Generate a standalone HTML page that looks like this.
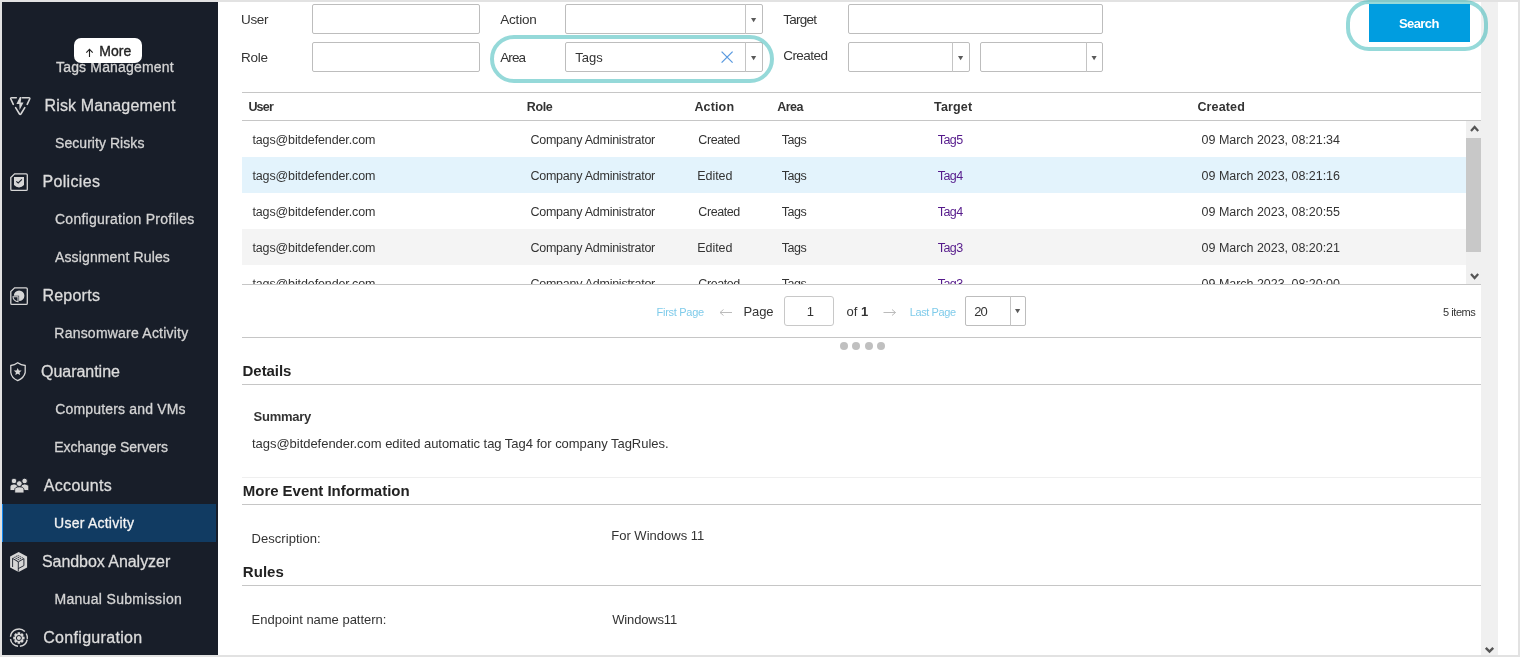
<!DOCTYPE html>
<html><head><meta charset="utf-8"><style>
*{box-sizing:border-box}
html,body{margin:0;padding:0}
body{width:1520px;height:657px;position:relative;overflow:hidden;background:#e2e2e2;font-family:"Liberation Sans",sans-serif}
.a{position:absolute;white-space:nowrap}
.inp{position:absolute;border:1px solid #bdbdbd;border-radius:2px;background:#fff}
.tri{position:absolute;width:0;height:0;border-left:3px solid transparent;border-right:3px solid transparent;border-top:4px solid #5a5a5a}
.hline{position:absolute;height:1px;background:#c6c6c6}
svg{overflow:visible;will-change:transform}
</style></head>
<body>
<div class="a" style="left:2px;top:2px;width:1516px;height:653px;background:#fff"></div>
<div class="a" style="left:2px;top:2px;width:216px;height:653px;background:#181e29"></div>
<div class="a" style="left:2px;top:504px;width:214px;height:38px;background:#113b62"></div>
<div class="a" style="left:2px;top:504px;width:1px;height:38px;background:#1488f0"></div>
<svg class="a" style="left:0;top:0" width="220" height="657" viewBox="0 0 220 657">
 <g fill="none" stroke="#d6d6d6" stroke-width="1.6" stroke-linecap="round" stroke-linejoin="round">
  <path d="M16.3 97.8 H11.6 Q10.3 97.8 10.8 99 L13.3 104.3"/>
  <path d="M22.4 97.8 H28.9 Q30.2 97.8 29.7 99 L27.2 104.3"/>
  <path d="M15.6 107.6 L19.5 114 Q20.2 114.9 20.9 114 L24.8 107.6"/>
 </g>
 <path d="M19.9 96.9 L16.4 104 H19.3 L19.6 110 L23.5 102.6 H20.6 L21.5 96.9Z" fill="#d6d6d6"/>
 <path d="M14.6 173.8 H26.1 Q27.3 173.8 27.3 175 V189.2 Q27.3 190.4 26.1 190.4 H12 Q10.8 190.4 10.8 189.2 V177.6 Z" fill="none" stroke="#d6d6d6" stroke-width="1.3"/>
 <path d="M14 177 H24 V185 Q22 187.3 19 187.6 Q16 187.3 14 185Z" fill="#d6d6d6"/>
 <path d="M16.3 181.3 L18.2 183 L21.9 179.4" fill="none" stroke="#181e29" stroke-width="1.1"/>
 <path d="M14.6 287.8 H26.1 Q27.3 287.8 27.3 289 V303.2 Q27.3 304.4 26.1 304.4 H12 Q10.8 304.4 10.8 303.2 V291.6 Z" fill="none" stroke="#d6d6d6" stroke-width="1.3"/>
 <path d="M19.1 295.7 H13.8 A5.3 5.3 0 1 1 19.1 301.0 Z" fill="#d6d6d6"/>
 <path d="M18.0 296.7 H13.000000000000002 A5.0 5.0 0 0 0 18.0 301.7 Z" fill="none" stroke="#d6d6d6" stroke-width="1.1"/>
 <path d="M17.7 362.8 Q14.5 365.2 10.8 365.5 V372.5 Q11.5 378 17.7 380.6 Q24 378 25.2 372.5 V365.5 Q21 365.2 17.7 362.8Z" fill="none" stroke="#d6d6d6" stroke-width="1.3"/>
 <path d="M17.7 367.9 L18.9 370.4 L21.6 370.6 L19.5 372.4 L20.1 375.1 L17.7 373.7 L15.3 375.1 L15.9 372.4 L13.8 370.6 L16.5 370.4Z" fill="#d6d6d6"/>
 <g fill="#d6d6d6" stroke="#181e29" stroke-width="0.9">
  <circle cx="14" cy="481" r="2.8"/>
  <path d="M10 490.5 V486.7 Q10.3 483.9 14 483.9 Q17.7 483.9 18 486.7 V490.5Z"/>
  <circle cx="24.6" cy="481" r="2.8"/>
  <path d="M20.8 490.5 V486.7 Q21.1 483.9 24.8 483.9 Q28.5 483.9 28.8 486.7 V490.5Z"/>
  <circle cx="19.3" cy="483.6" r="2.9"/>
  <path d="M14.7 493 V489.6 Q14.9 486.8 19.3 486.8 Q23.7 486.8 24 489.6 V493Z"/>
 </g>
 <path d="M18.6 551.9 L27.1 556.4 V567.6 L18.6 572.1 L10.1 567.6 V556.4Z" fill="#d6d6d6"/>
 <g fill="none" stroke="#181e29" stroke-width="0.9">
  <path d="M12.6 558.4 V567 M18.3 561.9 V571.6 M23.9 558.6 V565.6 L18.3 568.6"/>
  <path d="M12.6 558.4 L18.3 561.9 L23.9 558.6"/>
 </g>
 <g fill="none" stroke="#181e29" stroke-width="0.8" stroke-dasharray="1.1 1.1">
  <path d="M12.6 558.4 L18.2 555.3 L23.9 558.6"/>
  <path d="M14.5 557.3 L20.1 560.6 M16.4 556.2 L22 559.6 M16.4 560.6 L22 557.5 M14.5 559.6 L20.1 556.4"/>
 </g>
 <g fill="none" stroke="#d6d6d6" stroke-width="1.45">
  <path d="M10.5 636.8 A8.4 8.4 0 0 1 24.9 631.6"/>
  <path d="M26.2 633.5 A8.4 8.4 0 0 1 27.3 638.8"/>
  <path d="M27.2 639.6 A8.4 8.4 0 0 1 19.9 646.3"/>
  <path d="M18 646.3 A8.4 8.4 0 0 1 10.5 639.2"/>
 </g>
 <path d="M22.78 636.39 L22.86 636.60 L24.56 636.73 L24.56 639.27 L22.86 639.40 L22.78 639.61 L22.69 639.81 L23.80 641.11 L22.01 642.90 L20.71 641.79 L20.51 641.88 L20.30 641.96 L20.17 643.66 L17.63 643.66 L17.50 641.96 L17.29 641.88 L17.09 641.79 L15.79 642.90 L14.00 641.11 L15.11 639.81 L15.02 639.61 L14.94 639.40 L13.24 639.27 L13.24 636.73 L14.94 636.60 L15.02 636.39 L15.11 636.19 L14.00 634.89 L15.79 633.10 L17.09 634.21 L17.29 634.12 L17.50 634.04 L17.63 632.34 L20.17 632.34 L20.30 634.04 L20.51 634.12 L20.71 634.21 L22.01 633.10 L23.80 634.89 L22.69 636.19Z" fill="#d6d6d6"/>
 <circle cx="18.9" cy="638.0" r="2.5" fill="none" stroke="#181e29" stroke-width="1"/>
</svg>

<svg class="a" style="left:0;top:0" width="220" height="657" viewBox="0 0 220 657" font-family="Liberation Sans" stroke-width="0.3">
<text stroke="#d4d4d4" x="56.00" y="72" font-size="14" font-weight="normal" fill="#d4d4d4" letter-spacing="0.172" >Tags Management</text>
<text stroke="#dcdcdc" x="44.50" y="111" font-size="16" font-weight="normal" fill="#dcdcdc" letter-spacing="0.143" >Risk Management</text>
<text stroke="#d4d4d4" x="55.00" y="148" font-size="14" font-weight="normal" fill="#d4d4d4" letter-spacing="0.055" >Security Risks</text>
<text stroke="#dcdcdc" x="42.40" y="187" font-size="16" font-weight="normal" fill="#dcdcdc" letter-spacing="0.338" >Policies</text>
<text stroke="#d4d4d4" x="55.00" y="224" font-size="14" font-weight="normal" fill="#d4d4d4" letter-spacing="0.255" >Configuration Profiles</text>
<text stroke="#d4d4d4" x="55.00" y="262" font-size="14" font-weight="normal" fill="#d4d4d4" letter-spacing="0.132" >Assignment Rules</text>
<text stroke="#dcdcdc" x="42.40" y="301" font-size="16" font-weight="normal" fill="#dcdcdc" letter-spacing="0.246" >Reports</text>
<text stroke="#d4d4d4" x="54.30" y="338" font-size="14" font-weight="normal" fill="#d4d4d4" letter-spacing="0.222" >Ransomware Activity</text>
<text stroke="#dcdcdc" x="41.00" y="377" font-size="16" font-weight="normal" fill="#dcdcdc" letter-spacing="-0.030" >Quarantine</text>
<text stroke="#d4d4d4" x="55.30" y="414" font-size="14" font-weight="normal" fill="#d4d4d4" letter-spacing="0.162" >Computers and VMs</text>
<text stroke="#d4d4d4" x="54.30" y="452" font-size="14" font-weight="normal" fill="#d4d4d4" letter-spacing="-0.046" >Exchange Servers</text>
<text stroke="#dcdcdc" x="43.80" y="491" font-size="16" font-weight="normal" fill="#dcdcdc" letter-spacing="0.312" >Accounts</text>
<text stroke="#f4f4f4" x="54.10" y="528" font-size="14" font-weight="normal" fill="#f4f4f4" letter-spacing="0.234" >User Activity</text>
<text stroke="#dcdcdc" x="41.90" y="567" font-size="16" font-weight="normal" fill="#dcdcdc" letter-spacing="-0.042" >Sandbox Analyzer</text>
<text stroke="#d4d4d4" x="54.40" y="604" font-size="14" font-weight="normal" fill="#d4d4d4" letter-spacing="0.326" >Manual Submission</text>
<text stroke="#dcdcdc" x="43.20" y="643" font-size="16" font-weight="normal" fill="#dcdcdc" letter-spacing="0.319" >Configuration</text>
</svg>
<div class="a" style="left:74px;top:38px;width:68px;height:25px;background:#fff;border-radius:7px"></div>
<svg class="a" style="left:0;top:0" width="220" height="80" viewBox="0 0 220 80" font-family="Liberation Sans">
<path d="M89.5 57 V49.5 M86.3 52.7 L89.5 49.3 L92.7 52.7" fill="none" stroke="#222" stroke-width="1.1"/>
<text stroke="#222" stroke-width="0.35" x="99.30" y="56" font-size="14" font-weight="normal" fill="#222" letter-spacing="-0.003" >More</text>
</svg>

<div class="inp" style="left:312px;top:4px;width:168px;height:30px;"></div>
<div class="inp" style="left:312px;top:42px;width:168px;height:30px;"></div>
<div class="inp" style="left:848px;top:4px;width:255px;height:30px;"></div>
<div class="inp" style="left:565px;top:4px;width:198px;height:30px;"></div>
<div class="a" style="left:745px;top:4px;width:1px;height:30px;background:#c4c4c4"></div>
<svg class="a" style="left:0;top:0" width="1" height="1" viewBox="0 0 1 1"><path d="M751.00 18 H756.20 L753.60 22.2Z" fill="#5a5a5a"/></svg>
<div class="inp" style="left:565px;top:42px;width:198px;height:30px;"></div>
<div class="a" style="left:745px;top:42px;width:1px;height:30px;background:#c4c4c4"></div>
<svg class="a" style="left:0;top:0" width="1" height="1" viewBox="0 0 1 1"><path d="M751.00 56 H756.20 L753.60 60.2Z" fill="#5a5a5a"/></svg>
<div class="inp" style="left:848px;top:42px;width:122px;height:30px;"></div>
<div class="a" style="left:952px;top:42px;width:1px;height:30px;background:#c4c4c4"></div>
<svg class="a" style="left:0;top:0" width="1" height="1" viewBox="0 0 1 1"><path d="M958.00 56 H963.20 L960.60 60.2Z" fill="#5a5a5a"/></svg>
<div class="inp" style="left:980px;top:42px;width:123px;height:30px;"></div>
<div class="a" style="left:1086px;top:42px;width:1px;height:30px;background:#c4c4c4"></div>
<svg class="a" style="left:0;top:0" width="1" height="1" viewBox="0 0 1 1"><path d="M1091.50 56 H1096.70 L1094.10 60.2Z" fill="#5a5a5a"/></svg>
<svg class="a" style="left:720px;top:50px" width="14" height="14" viewBox="720 50 14 14"><path d="M721.6 51.6 L732.6 62.6 M732.6 51.6 L721.6 62.6" stroke="#5b9be0" stroke-width="1.3"/></svg>
<div class="a" style="left:1369px;top:4px;width:101px;height:38px;background:#009de0"></div>
<div class="hline" style="left:242px;top:92px;width:1239px"></div>
<div class="hline" style="left:242px;top:120px;width:1239px"></div>
<div class="a" style="left:242px;top:157px;width:1224px;height:36px;background:#e3f3fc"></div>
<div class="a" style="left:242px;top:229px;width:1224px;height:36px;background:#f4f4f4"></div>
<div class="a" style="left:1466px;top:121px;width:15px;height:163px;background:#f0f0f0"></div>
<div class="a" style="left:1466px;top:138px;width:15px;height:114px;background:#c8c8c8"></div>
<svg class="a" style="left:1466px;top:121px" width="15" height="163" viewBox="1466 121 15 163"><path d="M1471 131 L1474.6 127 L1478.2 131" fill="none" stroke="#555" stroke-width="2.2"/><path d="M1471 274 L1474.6 278 L1478.2 274" fill="none" stroke="#555" stroke-width="2.2"/></svg>
<div class="hline" style="left:242px;top:284px;width:1239px"></div>
<div class="inp" style="left:784px;top:296px;width:50px;height:30px;border-radius:3px;border-color:#c8c8c8"></div>
<div class="inp" style="left:965px;top:296px;width:61px;height:30px;"></div>
<div class="a" style="left:1010px;top:296px;width:1px;height:30px;background:#c4c4c4"></div>
<svg class="a" style="left:0;top:0" width="1" height="1" viewBox="0 0 1 1"><path d="M1015.00 309 H1020.20 L1017.60 313.2Z" fill="#5a5a5a"/></svg>
<svg class="a" style="left:715px;top:305px" width="190" height="15" viewBox="715 305 190 15"><path d="M720 312.5 H732 M723.5 309.5 L720 312.5 L723.5 315.5" fill="none" stroke="#bbb" stroke-width="1"/><path d="M883.5 312.5 H895.5 M892 309.5 L895.5 312.5 L892 315.5" fill="none" stroke="#bbb" stroke-width="1"/></svg>
<div class="hline" style="left:242px;top:337px;width:1239px"></div>
<div class="a" style="left:840px;top:342.3px;width:8px;height:8px;border-radius:4px;background:#c0c0c0"></div>
<div class="a" style="left:852.3px;top:342.3px;width:8px;height:8px;border-radius:4px;background:#c0c0c0"></div>
<div class="a" style="left:864.7px;top:342.3px;width:8px;height:8px;border-radius:4px;background:#c0c0c0"></div>
<div class="a" style="left:877px;top:342.3px;width:8px;height:8px;border-radius:4px;background:#c0c0c0"></div>
<div class="hline" style="left:242px;top:384px;width:1239px"></div>
<div class="a" style="left:242px;top:477px;width:1239px;height:1px;background:#efefef"></div>
<div class="hline" style="left:242px;top:504px;width:1239px"></div>
<div class="hline" style="left:242px;top:585px;width:1239px"></div>
<div class="a" style="left:1481px;top:2px;width:17px;height:653px;background:#f0f0f0"></div>
<svg class="a" style="left:1481px;top:640px" width="17" height="15" viewBox="1481 640 17 15"><path d="M1485.8 647.8 L1489.5 651.6 L1493.2 647.8" fill="none" stroke="#555" stroke-width="2.4"/></svg>

<svg class="a" style="left:0;top:0" width="1520" height="657" viewBox="0 0 1520 657" font-family="Liberation Sans">
<text x="241.10" y="24" font-size="13.5" font-weight="normal" fill="#333" letter-spacing="-0.402" >User</text>
<text x="241.10" y="62" font-size="13.5" font-weight="normal" fill="#333" letter-spacing="-0.252" >Role</text>
<text x="500.20" y="24" font-size="13.5" font-weight="normal" fill="#333" letter-spacing="-0.182" >Action</text>
<text x="500.20" y="62" font-size="13.5" font-weight="normal" fill="#333" letter-spacing="-0.869" >Area</text>
<text x="783.20" y="24" font-size="13.5" font-weight="normal" fill="#333" letter-spacing="-0.734" >Target</text>
<text x="783.20" y="60" font-size="13.5" font-weight="normal" fill="#333" letter-spacing="-0.553" >Created</text>
<text x="575.30" y="62" font-size="13" font-weight="normal" fill="#333" letter-spacing="0.000" >Tags</text>
<text x="1399.00" y="28" font-size="13" font-weight="bold" fill="#fff" letter-spacing="-0.604" >Search</text>
<text x="248.40" y="111" font-size="12.5" font-weight="bold" fill="#333" letter-spacing="-0.810" >User</text>
<text x="526.80" y="111" font-size="12.5" font-weight="bold" fill="#333" letter-spacing="-0.378" >Role</text>
<text x="694.40" y="111" font-size="12.5" font-weight="bold" fill="#333" letter-spacing="0.150" >Action</text>
<text x="777.20" y="111" font-size="12.5" font-weight="bold" fill="#333" letter-spacing="-0.515" >Area</text>
<text x="934.00" y="111" font-size="12.5" font-weight="bold" fill="#333" letter-spacing="0.178" >Target</text>
<text x="1197.40" y="111" font-size="12.5" font-weight="bold" fill="#333" letter-spacing="0.148" >Created</text>
<text x="656.60" y="316" font-size="11" font-weight="normal" fill="#7fcbea" letter-spacing="-0.290" >First Page</text>
<text x="743.50" y="316" font-size="13" font-weight="normal" fill="#333" letter-spacing="-0.110" >Page</text>
<text x="806.80" y="316" font-size="13" font-weight="normal" fill="#333" letter-spacing="0.000" >1</text>
<text x="846.60" y="316" font-size="13" font-weight="normal" fill="#333" letter-spacing="0.000" >of</text>
<text x="861.00" y="316" font-size="13" font-weight="bold" fill="#333" letter-spacing="0.000" >1</text>
<text x="909.70" y="316" font-size="11" font-weight="normal" fill="#7fcbea" letter-spacing="-0.390" >Last Page</text>
<text x="974.20" y="316" font-size="13" font-weight="normal" fill="#333" letter-spacing="-1.030" >20</text>
<text x="1443.00" y="316" font-size="11" font-weight="normal" fill="#333" letter-spacing="-0.442" >5 items</text>
<text x="242.60" y="375.5" font-size="15" font-weight="bold" fill="#222" letter-spacing="-0.058" >Details</text>
<text x="253.50" y="421" font-size="13" font-weight="bold" fill="#333" letter-spacing="-0.237" >Summary</text>
<text x="252.00" y="448" font-size="13" font-weight="normal" fill="#333" letter-spacing="-0.035" >tags@bitdefender.com edited automatic tag Tag4 for company TagRules.</text>
<text x="242.80" y="496" font-size="15" font-weight="bold" fill="#222" letter-spacing="-0.036" >More Event Information</text>
<text x="251.60" y="543" font-size="13" font-weight="normal" fill="#333" letter-spacing="0.034" >Description:</text>
<text x="611.20" y="540" font-size="13" font-weight="normal" fill="#333" letter-spacing="0.013" >For Windows 11</text>
<text x="242.80" y="577" font-size="15" font-weight="bold" fill="#222" letter-spacing="0.049" >Rules</text>
<text x="251.60" y="624" font-size="13" font-weight="normal" fill="#333" letter-spacing="-0.016" >Endpoint name pattern:</text>
<text x="612.20" y="624" font-size="13" font-weight="normal" fill="#333" letter-spacing="-0.150" >Windows11</text>
</svg>
<svg class="a" style="left:242px;top:121px;overflow:hidden" width="1224" height="163" viewBox="242 121 1224 163" font-family="Liberation Sans">
<text x="252.40" y="144" font-size="12.5" font-weight="normal" fill="#333" letter-spacing="-0.118" >tags@bitdefender.com</text>
<text x="530.50" y="144" font-size="12.5" font-weight="normal" fill="#333" letter-spacing="-0.257" >Company Administrator</text>
<text x="698.30" y="144" font-size="12.5" font-weight="normal" fill="#333" letter-spacing="-0.420" >Created</text>
<text x="781.80" y="144" font-size="12.5" font-weight="normal" fill="#333" letter-spacing="-0.518" >Tags</text>
<text x="937.70" y="144" font-size="12.5" font-weight="normal" fill="#551a8b" letter-spacing="-0.518" >Tag5</text>
<text x="1201.60" y="144" font-size="12.5" font-weight="normal" fill="#333" letter-spacing="-0.029" >09 March 2023, 08:21:34</text>
<text x="252.40" y="180" font-size="12.5" font-weight="normal" fill="#333" letter-spacing="-0.118" >tags@bitdefender.com</text>
<text x="530.50" y="180" font-size="12.5" font-weight="normal" fill="#333" letter-spacing="-0.257" >Company Administrator</text>
<text x="697.30" y="180" font-size="12.5" font-weight="normal" fill="#333" letter-spacing="-0.078" >Edited</text>
<text x="781.80" y="180" font-size="12.5" font-weight="normal" fill="#333" letter-spacing="-0.518" >Tags</text>
<text x="937.70" y="180" font-size="12.5" font-weight="normal" fill="#551a8b" letter-spacing="-0.518" >Tag4</text>
<text x="1201.60" y="180" font-size="12.5" font-weight="normal" fill="#333" letter-spacing="-0.029" >09 March 2023, 08:21:16</text>
<text x="252.40" y="216" font-size="12.5" font-weight="normal" fill="#333" letter-spacing="-0.118" >tags@bitdefender.com</text>
<text x="530.50" y="216" font-size="12.5" font-weight="normal" fill="#333" letter-spacing="-0.257" >Company Administrator</text>
<text x="698.30" y="216" font-size="12.5" font-weight="normal" fill="#333" letter-spacing="-0.420" >Created</text>
<text x="781.80" y="216" font-size="12.5" font-weight="normal" fill="#333" letter-spacing="-0.518" >Tags</text>
<text x="937.70" y="216" font-size="12.5" font-weight="normal" fill="#551a8b" letter-spacing="-0.518" >Tag4</text>
<text x="1201.60" y="216" font-size="12.5" font-weight="normal" fill="#333" letter-spacing="-0.029" >09 March 2023, 08:20:55</text>
<text x="252.40" y="252" font-size="12.5" font-weight="normal" fill="#333" letter-spacing="-0.118" >tags@bitdefender.com</text>
<text x="530.50" y="252" font-size="12.5" font-weight="normal" fill="#333" letter-spacing="-0.257" >Company Administrator</text>
<text x="697.30" y="252" font-size="12.5" font-weight="normal" fill="#333" letter-spacing="-0.078" >Edited</text>
<text x="781.80" y="252" font-size="12.5" font-weight="normal" fill="#333" letter-spacing="-0.518" >Tags</text>
<text x="937.70" y="252" font-size="12.5" font-weight="normal" fill="#551a8b" letter-spacing="-0.518" >Tag3</text>
<text x="1201.60" y="252" font-size="12.5" font-weight="normal" fill="#333" letter-spacing="-0.029" >09 March 2023, 08:20:21</text>
<text x="252.40" y="288" font-size="12.5" font-weight="normal" fill="#333" letter-spacing="-0.118" >tags@bitdefender.com</text>
<text x="530.50" y="288" font-size="12.5" font-weight="normal" fill="#333" letter-spacing="-0.257" >Company Administrator</text>
<text x="698.30" y="288" font-size="12.5" font-weight="normal" fill="#333" letter-spacing="-0.420" >Created</text>
<text x="781.80" y="288" font-size="12.5" font-weight="normal" fill="#333" letter-spacing="-0.518" >Tags</text>
<text x="937.70" y="288" font-size="12.5" font-weight="normal" fill="#551a8b" letter-spacing="-0.518" >Tag3</text>
<text x="1201.60" y="288" font-size="12.5" font-weight="normal" fill="#333" letter-spacing="-0.029" >09 March 2023, 08:20:00</text>
</svg>
<div class="a" style="left:490px;top:35px;width:284px;height:48px;border:4px solid rgba(20,170,170,0.45);border-radius:24px"></div>
<div class="a" style="left:1346px;top:0px;width:142px;height:51px;border:4px solid rgba(20,170,170,0.45);border-radius:23px"></div>

</body></html>
